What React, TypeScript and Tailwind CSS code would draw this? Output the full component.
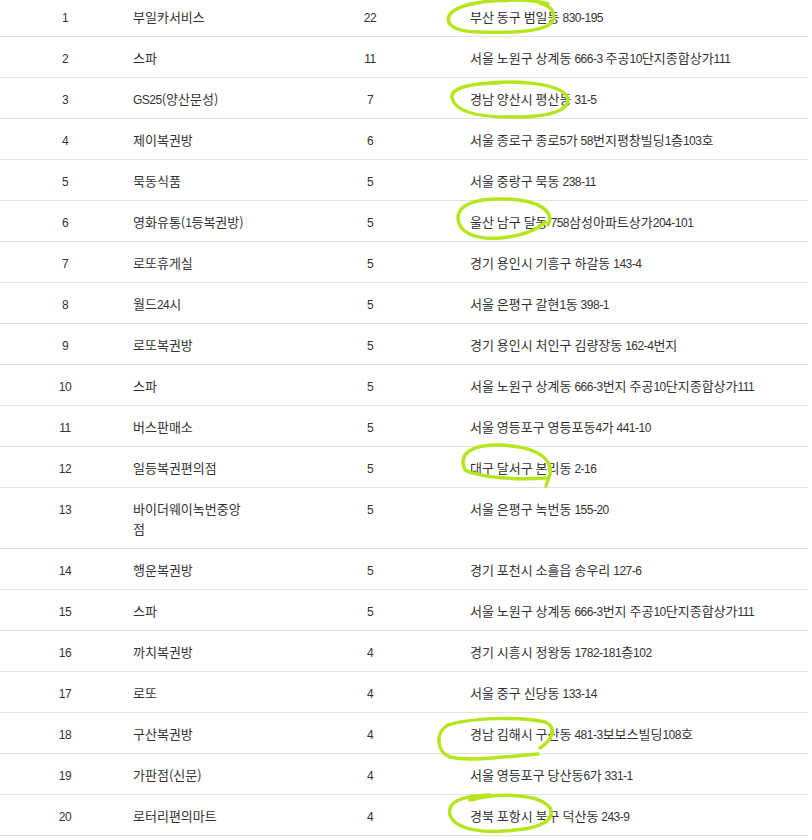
import React from 'react';

type Row = { rank: number; name: string; count: number; addr: string };

const rows: Row[] = [
  { rank: 1, name: '부일카서비스', count: 22, addr: '부산 동구 범일동 830-195' },
  { rank: 2, name: '스파', count: 11, addr: '서울 노원구 상계동 666-3 주공10단지종합상가111' },
  { rank: 3, name: 'GS25(양산문성)', count: 7, addr: '경남 양산시 평산동 31-5' },
  { rank: 4, name: '제이복권방', count: 6, addr: '서울 종로구 종로5가 58번지평창빌딩1층103호' },
  { rank: 5, name: '묵동식품', count: 5, addr: '서울 중랑구 묵동 238-11' },
  { rank: 6, name: '영화유통(1등복권방)', count: 5, addr: '울산 남구 달동 758삼성아파트상가204-101' },
  { rank: 7, name: '로또휴게실', count: 5, addr: '경기 용인시 기흥구 하갈동 143-4' },
  { rank: 8, name: '월드24시', count: 5, addr: '서울 은평구 갈현1동 398-1' },
  { rank: 9, name: '로또복권방', count: 5, addr: '경기 용인시 처인구 김량장동 162-4번지' },
  { rank: 10, name: '스파', count: 5, addr: '서울 노원구 상계동 666-3번지 주공10단지종합상가111' },
  { rank: 11, name: '버스판매소', count: 5, addr: '서울 영등포구 영등포동4가 441-10' },
  { rank: 12, name: '일등복권편의점', count: 5, addr: '대구 달서구 본리동 2-16' },
  { rank: 13, name: '바이더웨이녹번중앙점', count: 5, addr: '서울 은평구 녹번동 155-20' },
  { rank: 14, name: '행운복권방', count: 5, addr: '경기 포천시 소흘읍 송우리 127-6' },
  { rank: 15, name: '스파', count: 5, addr: '서울 노원구 상계동 666-3번지 주공10단지종합상가111' },
  { rank: 16, name: '까치복권방', count: 4, addr: '경기 시흥시 정왕동 1782-181층102' },
  { rank: 17, name: '로또', count: 4, addr: '서울 중구 신당동 133-14' },
  { rank: 18, name: '구산복권방', count: 4, addr: '경남 김해시 구산동 481-3보보스빌딩108호' },
  { rank: 19, name: '가판점(신문)', count: 4, addr: '서울 영등포구 당산동6가 331-1' },
  { rank: 20, name: '로터리편의마트', count: 4, addr: '경북 포항시 북구 덕산동 243-9' },
];

// hand-drawn highlighter marks over the address column (page coordinates)
const marks = [
  'M 548 4 C 530 -2, 470 -2, 452 12 C 442 22, 452 32, 480 32 C 510 33, 545 32, 552 22 C 556 14, 552 6, 540 3',
  'M 480 84 C 510 80, 555 82, 566 95 C 573 106, 560 116, 520 117 C 480 118, 455 112, 452 98 C 450 88, 470 83, 500 83',
  'M 548 225 C 555 212, 540 200, 505 199 C 475 198, 458 205, 458 218 C 458 232, 475 240, 500 238 C 520 236, 535 232, 545 222',
  'M 465 470 C 458 455, 470 444, 500 445 C 530 446, 548 455, 550 468 C 552 475, 547 480, 546 486 M 545 478 C 520 480, 480 478, 465 470',
  'M 540 748 C 552 740, 558 728, 545 722 C 520 716, 470 718, 448 725 C 435 732, 436 752, 450 757 C 470 762, 510 756, 538 754',
  'M 470 800 C 500 792, 540 794, 550 808 C 556 820, 540 828, 515 830 C 485 834, 455 830, 450 815 C 447 802, 460 796, 490 795',
];

// digits / latin runs use a narrower face than the hangul, like the original page
function Mixed({ text }: { text: string }) {
  const parts = text.split(/([A-Za-z0-9-]+)/);
  return (
    <>
      {parts.map((p, i) =>
        i % 2 === 1 ? (
          <span key={i} className="font-['Liberation_Sans',sans-serif] text-[12px] leading-none tracking-[-0.5px]">{p}</span>
        ) : (
          <React.Fragment key={i}>{p}</React.Fragment>
        )
      )}
    </>
  );
}

export default function App() {
  return (
    <div className="relative w-[812px] h-[840px] overflow-hidden bg-white font-['Noto_Sans_CJK_KR',sans-serif] text-[13px] leading-[20px] text-[#333]">
      <table className="w-[808px] -mt-[4px] table-fixed border-collapse">
        <colgroup>
          <col className="w-[130px]" />
          <col className="w-[150px]" />
          <col className="w-[180px]" />
          <col />
        </colgroup>
        <tbody>
          {rows.map((r) => (
            <tr key={r.rank} className="border-b border-[#e2e2e2]">
              <td className="pt-[11px] pb-[9px] align-top text-center"><Mixed text={String(r.rank)} /></td>
              <td className="pt-[11px] pb-[9px] pl-[3px] pr-[30px] align-top"><Mixed text={r.name} /></td>
              <td className="pt-[11px] pb-[9px] align-top text-center"><Mixed text={String(r.count)} /></td>
              <td className="pt-[11px] pb-[9px] pl-[10px] align-top"><Mixed text={r.addr} /></td>
            </tr>
          ))}
        </tbody>
      </table>

      {/* highlighter annotations */}
      <svg className="absolute inset-0 pointer-events-none" width="812" height="840" viewBox="0 0 812 840">
        {marks.map((d, i) => (
          <path key={i} d={d} fill="none" stroke="#b5e61d" strokeWidth={3.5} strokeLinecap="round" strokeLinejoin="round" />
        ))}
      </svg>
    </div>
  );
}
